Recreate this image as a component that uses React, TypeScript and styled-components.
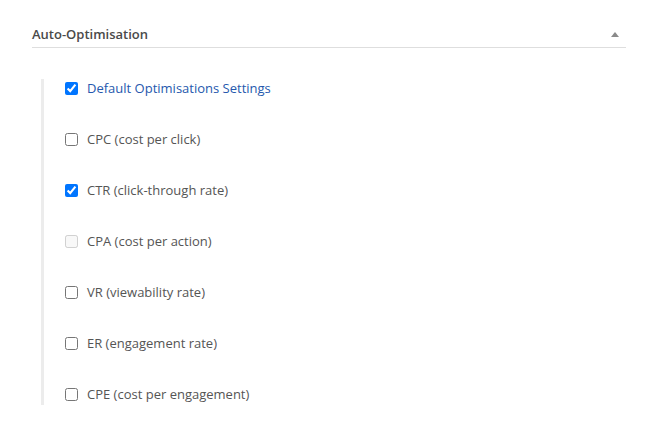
import React from "react";
import styled, { createGlobalStyle } from "styled-components";

const Global = createGlobalStyle`
  html, body { margin: 0; padding: 0; background: #ffffff; }
  body { font-family: "Open Sans", "Liberation Sans", sans-serif; }
`;

const Page = styled.div`
  padding: 24px 34px 0 32px;
`;

const Header = styled.div`
  display: flex;
  align-items: center;
  justify-content: space-between;
  padding: 1px 0 4px 0;
  border-bottom: 1px solid #dedede;
`;

const Title = styled.span`
  font-size: 13px;
  font-weight: 600;
  line-height: 18px;
  color: #4a4a4a;
`;

const Caret = styled.span`
  width: 0;
  height: 0;
  margin-right: 7px;
  border-left: 4px solid transparent;
  border-right: 4px solid transparent;
  border-bottom: 5px solid #8a8a8a;
`;

const List = styled.div`
  margin: 31px 0 0 9px;
  border-left: 3px solid #ececec;
  padding: 0 0 2px 21px;
  display: flex;
  flex-direction: column;
  gap: 33px;
`;

const Row = styled.label`
  display: flex;
  align-items: center;
  gap: 9px;
  height: 18px;
  font-size: 13px;
  color: #555555;
`;

const Box = styled.input`
  margin: 0;
  width: 13px;
  height: 13px;
`;

const Text = styled.span<{ $accent?: boolean }>`
  color: ${(p) => (p.$accent ? "#2558ad" : "inherit")};
`;

const items = [
  { label: "Default Optimisations Settings", checked: true, accent: true },
  { label: "CPC (cost per click)" },
  { label: "CTR (click-through rate)", checked: true },
  { label: "CPA (cost per action)", disabled: true },
  { label: "VR (viewability rate)" },
  { label: "ER (engagement rate)" },
  { label: "CPE (cost per engagement)" },
];

export default function App() {
  return (
    <>
      <Global />
      <Page>
        <Header>
          <Title>Auto-Optimisation</Title>
          <Caret />
        </Header>
        <List>
          {items.map((it) => (
            <Row key={it.label}>
              <Box type="checkbox" defaultChecked={!!it.checked} disabled={!!it.disabled} />
              <Text $accent={it.accent}>{it.label}</Text>
            </Row>
          ))}
        </List>
      </Page>
    </>
  );
}
